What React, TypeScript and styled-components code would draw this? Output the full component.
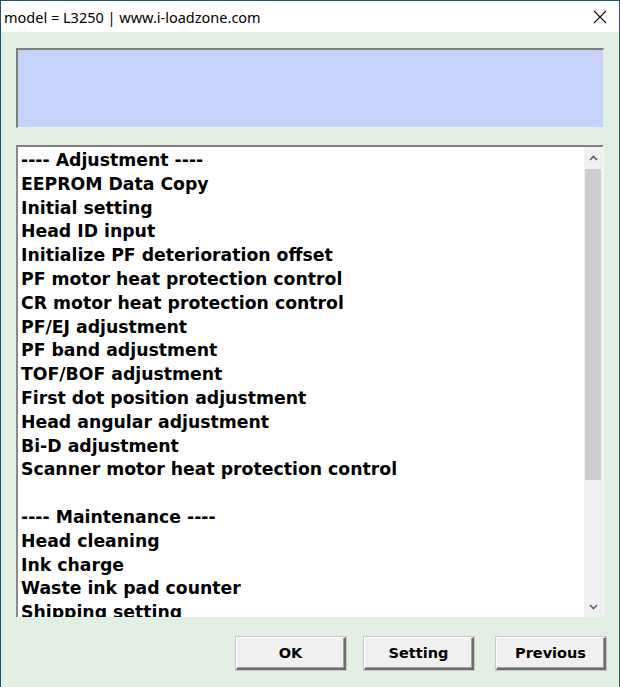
import styled, { createGlobalStyle } from "styled-components";

const GlobalStyle = createGlobalStyle`
    html, body {
        margin: 0;
        padding: 0;
        background: #e1f0e3;
    }
`;

const Window = styled.div`
    width: 620px;
    height: 687px;
    box-sizing: border-box;
    display: flex;
    flex-direction: column;
    border: 1px solid #1f5567;
    border-bottom: none;
    background: #e1f0e3;
`;

const TitleBar = styled.div`
    height: 31px;
    background: #ffffff;
    display: flex;
    align-items: center;
    justify-content: space-between;
    padding: 0 12px 0 3px;
    font-family: "Noto Sans", "Open Sans", sans-serif;
    font-size: 14.5px;
    color: #000;
`;

const CloseIcon = styled.svg`
    width: 14px;
    height: 14px;
    margin-top: 1px;
`;

const Body = styled.div`
    flex: 1;
    display: flex;
    flex-direction: column;
    padding: 16px 15px 0 15px;
`;

const StatusBox = styled.div`
    height: 80px;
    box-sizing: border-box;
    background: #c6d2fb;
    border-top: 2px solid #7f7f7f;
    border-left: 2px solid #7f7f7f;
    border-right: 1px solid #e8ecf8;
    border-bottom: 1px solid #e8ecf8;
`;

const ListBox = styled.div`
    margin-top: 17px;
    height: 472px;
    box-sizing: border-box;
    display: flex;
    background: #ffffff;
    border-top: 2px solid #7f7f7f;
    border-left: 2px solid #8a8a8a;
    border-right: 2px solid #f4f4f4;
`;

const Items = styled.ul`
    flex: 1;
    list-style: none;
    margin: 0;
    padding: 2px 0 0 3px;
    overflow: hidden;
    font-family: "DejaVu Sans", Verdana, sans-serif;
    font-weight: bold;
    font-size: 17.3px;
    line-height: 23.8px;
    color: #000;
`;

const Item = styled.li`
    height: 23.8px;
    white-space: nowrap;
`;

const ScrollBar = styled.div`
    width: 18px;
    display: flex;
    flex-direction: column;
    background: #f0f0f0;
`;

const Arrow = styled.div`
    height: 21px;
    display: flex;
    align-items: center;
    justify-content: center;
`;

const Track = styled.div`
    flex: 1;
    padding-top: 1px;
`;

const Thumb = styled.div`
    margin: 0 1px;
    height: 311px;
    background: #cdcdcd;
`;

const ButtonRow = styled.div`
    display: flex;
    justify-content: flex-end;
    padding-top: 20px;
    margin-right: -2px;
`;

const Button = styled.button<{ $gapLeft?: number }>`
    width: 110px;
    height: 33px;
    box-sizing: border-box;
    margin-left: ${(p) => (p.$gapLeft ? `${p.$gapLeft}px` : "0")};
    background: #f0f0f0;
    border-style: solid;
    border-width: 1px 2px 2px 1px;
    border-color: #ffffff #6d6d6d #6d6d6d #ffffff;
    box-shadow: inset -1px -1px 0 #a0a0a0;
    outline: 1px solid #c8c8c8;
    font-family: "DejaVu Sans", Verdana, sans-serif;
    font-weight: bold;
    font-size: 14.5px;
    color: #000;
    padding: 0;
`;

const items = [
    "---- Adjustment ----",
    "EEPROM Data Copy",
    "Initial setting",
    "Head ID input",
    "Initialize PF deterioration offset",
    "PF motor heat protection control",
    "CR motor heat protection control",
    "PF/EJ adjustment",
    "PF band adjustment",
    "TOF/BOF adjustment",
    "First dot position adjustment",
    "Head angular adjustment",
    "Bi-D adjustment",
    "Scanner motor heat protection control",
    "",
    "---- Maintenance ----",
    "Head cleaning",
    "Ink charge",
    "Waste ink pad counter",
    "Shipping setting",
];

function Chevron({ up }: { up?: boolean }) {
    return (
        <svg width="9" height="6" viewBox="0 0 9 6">
            <path
                d={up ? "M1 5 L4.5 1.5 L8 5" : "M1 1 L4.5 4.5 L8 1"}
                fill="none"
                stroke="#606060"
                strokeWidth="1.6"
            />
        </svg>
    );
}

function App() {
    return (
        <Window>
            <GlobalStyle />
            <TitleBar>
                <span>model = L3250 | www.i-loadzone.com</span>
                <CloseIcon viewBox="0 0 14 14">
                    <path d="M1 1 L13 13 M13 1 L1 13" stroke="#111" strokeWidth="1.1" />
                </CloseIcon>
            </TitleBar>
            <Body>
                <StatusBox />
                <ListBox>
                    <Items>
                        {items.map((t, i) => (
                            <Item key={i}>{t}</Item>
                        ))}
                    </Items>
                    <ScrollBar>
                        <Arrow><Chevron up /></Arrow>
                        <Track><Thumb /></Track>
                        <Arrow><Chevron /></Arrow>
                    </ScrollBar>
                </ListBox>
                <ButtonRow>
                    <Button>OK</Button>
                    <Button $gapLeft={18}>Setting</Button>
                    <Button $gapLeft={22}>Previous</Button>
                </ButtonRow>
            </Body>
        </Window>
    );
}

export default App;
